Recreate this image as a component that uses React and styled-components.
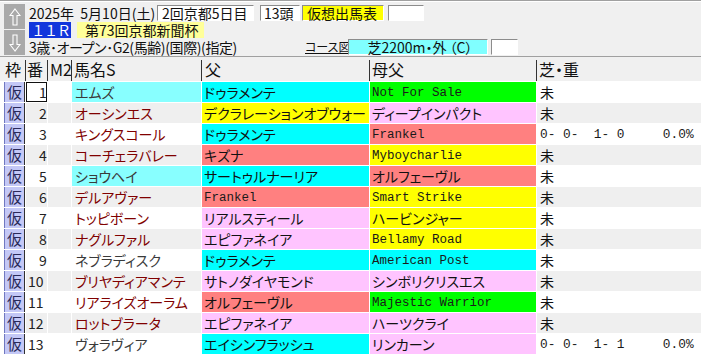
import React from 'react';
import styled, { createGlobalStyle, css } from 'styled-components';

const GlobalStyle = createGlobalStyle`
  body {
    margin: 0;
    background: #ffffff;
    font-family: "Noto Sans CJK JP", sans-serif;
    font-feature-settings: "palt" 1;
  }
`;

const Page = styled.div`
  width: 701px;
  height: 359px;
  overflow: hidden;
  background: #ffffff;
`;

const TopPanel = styled.div`
  display: flex;
  height: 52px;
  padding: 3px 0 0 4px;
  background: #f0f0f0;
  border-top: 1px solid #a0a0a0;
  border-bottom: 1px solid #a0a0a0;
  box-shadow: inset 0 1px 0 #ffffff;
`;

const NavColumn = styled.div`
  display: flex;
  flex-direction: column;
  gap: 1px;
`;

const NavButton = styled.div`
  width: 21px;
  height: 25px;
  display: flex;
  align-items: center;
  justify-content: center;
  background: #a9a9a9;
`;

const InfoColumn = styled.div`
  display: grid;
  grid-template-rows: 16px 16px 16px;
  row-gap: 1px;
  margin-left: 4px;
  padding-top: 1px;
`;

const InfoLine = styled.div`
  display: flex;
  align-items: center;
  font-size: 14px;
  line-height: 16px;
  color: #111;
  white-space: nowrap;
`;

const Label = styled.span`
  display: inline-block;
  width: ${p => p.w}px;
  font-size: ${p => p.size || 14}px;
  letter-spacing: ${p => p.ls || 0}px;
`;

const Field = styled.span`
  display: inline-block;
  box-sizing: border-box;
  width: ${p => p.w}px;
  height: 16px;
  margin-left: ${p => p.ml || 0}px;
  padding-left: ${p => p.pl || 4}px;
  background: ${p => p.bg || '#ffffff'};
  color: ${p => p.fg || '#111'};
  font-size: 14px;
  line-height: 15px;
  letter-spacing: ${p => p.ls || 0}px;
  text-align: ${p => (p.center ? 'center' : 'left')};
  border-top: 1px solid #8c8c8c;
  border-left: 1px solid #8c8c8c;
  border-bottom: 1px solid #ffffff;
  border-right: 1px solid #ffffff;
  ${p =>
    p.flat &&
    css`
      border: none;
      line-height: 16px;
    `}
`;

const CourseLink = styled.span`
  display: inline-block;
  width: 40px;
  font-size: 12px;
  text-decoration: underline;
  color: #111;
`;

const Table = styled.div`
  display: grid;
  grid-template-columns: 21px 21px 23px 129px 167px 166px 164px;
  grid-auto-rows: 20px;
  grid-template-rows: 24px;
  column-gap: 1px;
  row-gap: 1px;
  padding-left: 4px;
  background: #ffffff;
`;

const HeadCell = styled.div`
  position: relative;
  background: #f0f0f0;
  font-size: 16px;
  line-height: 24px;
  padding-left: ${p => p.pl || 2}px;
  color: #111;
  white-space: nowrap;
  ${p =>
    p.divider &&
    css`
      &::before {
        content: '';
        position: absolute;
        left: -1px;
        top: 3px;
        bottom: 0;
        width: 1px;
        background: #333;
      }
    `}
`;

const HeadFill = styled.div`
  grid-column: 1 / -1;
  grid-row: 1;
  margin-left: -4px;
  background: #f0f0f0;
`;

const FrameCell = styled.div`
  background: #c4c8f6;
  border-left: 1px solid #7078c0;
  border-right: 1px solid #303030;
  box-sizing: border-box;
  font-size: 15px;
  line-height: 20px;
  text-align: center;
  color: #2a2a5a;
`;

const NumCell = styled.div`
  box-sizing: border-box;
  background: ${p => (p.even ? '#efefef' : '#ffffff')};
  font-size: 14px;
  line-height: 20px;
  padding-left: ${p => (p.single ? 13 : 2)}px;
  color: #222;
  ${p =>
    p.focus &&
    css`
      border: 1px solid #111;
      line-height: 18px;
      padding-left: 12px;
    `}
`;

const Cell = styled.div`
  box-sizing: border-box;
  background: ${p => p.bg || (p.even ? '#efefef' : '#ffffff')};
  font-size: 14px;
  line-height: 20px;
  padding-left: ${p => p.pl || 2}px;
  color: ${p => p.fg || '#111'};
  white-space: pre;
  overflow: hidden;
  ${p =>
    p.mono &&
    css`
      font-family: "Liberation Mono", "DejaVu Sans Mono", monospace;
      font-size: ${p.small ? 12.5 : 12.8}px;
      padding-top: 2px;
      line-height: 18px;
      color: #1a1a1a;
    `}
`;

const CYAN = '#00ffff';
const LCYAN = '#88ffff';
const YELLOW = '#ffff00';
const PINK = '#ffc4ff';
const SALMON = '#ff8080';
const GREEN = '#00ff00';

const RED = '#800000';
const DARK = '#3a3a3a';

const horses = [
  { name: 'エムズ', nameBg: LCYAN, fg: DARK, sire: 'ドゥラメンテ', sireBg: CYAN, dam: 'Not For Sale', damBg: GREEN, rec: '未' },
  { name: 'オーシンエス', fg: RED, sire: 'デクラレーションオブウォー', sireBg: YELLOW, dam: 'ディープインパクト', damBg: PINK, rec: '未' },
  { name: 'キングスコール', fg: RED, sire: 'ドゥラメンテ', sireBg: CYAN, dam: 'Frankel', damBg: SALMON, rec: '0- 0-  1- 0     0.0%' },
  { name: 'コーチェラバレー', fg: RED, sire: 'キズナ', sireBg: SALMON, dam: 'Myboycharlie', damBg: YELLOW, rec: '未' },
  { name: 'ショウヘイ', nameBg: LCYAN, fg: DARK, sire: 'サートゥルナーリア', sireBg: CYAN, dam: 'オルフェーヴル', damBg: SALMON, rec: '未' },
  { name: 'デルアヴァー', fg: RED, sire: 'Frankel', sireBg: SALMON, dam: 'Smart Strike', damBg: YELLOW, rec: '未' },
  { name: 'トッピボーン', fg: RED, sire: 'リアルスティール', sireBg: PINK, dam: 'ハービンジャー', damBg: YELLOW, rec: '未' },
  { name: 'ナグルファル', fg: RED, sire: 'エピファネイア', sireBg: PINK, dam: 'Bellamy Road', damBg: YELLOW, rec: '未' },
  { name: 'ネブラディスク', fg: DARK, sire: 'ドゥラメンテ', sireBg: CYAN, dam: 'American Post', damBg: CYAN, rec: '未' },
  { name: 'ブリヤディアマンテ', fg: RED, sire: 'サトノダイヤモンド', sireBg: PINK, dam: 'シンボリクリスエス', damBg: PINK, rec: '未' },
  { name: 'リアライズオーラム', fg: RED, sire: 'オルフェーヴル', sireBg: SALMON, dam: 'Majestic Warrior', damBg: GREEN, rec: '未' },
  { name: 'ロットブラータ', fg: RED, sire: 'エピファネイア', sireBg: PINK, dam: 'ハーツクライ', damBg: PINK, rec: '未' },
  { name: 'ヴォラヴィア', fg: DARK, sire: 'エイシンフラッシュ', sireBg: CYAN, dam: 'リンカーン', damBg: PINK, rec: '0- 0-  1- 1     0.0%' },
];

const isLatin = s => /^[A-Za-z ]+$/.test(s);
const isRecord = s => s !== '未';

const Arrow = ({ down }) => (
  <svg width="12" height="18" viewBox="0 0 12 18" style={down ? { transform: 'rotate(180deg)' } : undefined}>
    <polygon
      points="6,1 11,7.5 8,7.5 8,17 4,17 4,7.5 1,7.5"
      fill="none"
      stroke="#ffffff"
      strokeWidth="1.1"
      strokeLinejoin="miter"
    />
  </svg>
);

const App = () => (
  <Page>
    <GlobalStyle />
    <TopPanel>
      <NavColumn>
        <NavButton>
          <Arrow />
        </NavButton>
        <NavButton>
          <Arrow down />
        </NavButton>
      </NavColumn>
      <InfoColumn>
        <InfoLine>
          <Label w={128}>2025年&nbsp;&nbsp;5月10日(土)</Label>
          <Field w={97}>2回京都5日目</Field>
          <Field w={40} ml={6} pl={3}>13頭</Field>
          <Field w={82} ml={2} pl={4} bg="#ffff00">仮想出馬表</Field>
          <Field w={36} ml={4} />
        </InfoLine>
        <InfoLine>
          <Field w={42} flat bg="#1236dc" fg="#ffffff" center ls={2}>１１Ｒ</Field>
          <Field w={127} ml={6} flat bg="#ffff99" pl={8}>第73回京都新聞杯</Field>
        </InfoLine>
        <InfoLine>
          <Label w={276} ls={-0.4}>3歳･オープン･G2(馬齢)(国際)(指定)</Label>
          <CourseLink>コース図</CourseLink>
          <Field w={140} ml={3} bg="#80ffff" center>芝2200m・外 （C）</Field>
          <Field w={27} ml={3} />
        </InfoLine>
      </InfoColumn>
    </TopPanel>
    <Table>
      <HeadFill />
      <HeadCell style={{ gridRow: 1, gridColumn: 1 }} pl={1}>枠</HeadCell>
      <HeadCell style={{ gridRow: 1, gridColumn: 2 }} divider pl={1}>番</HeadCell>
      <HeadCell style={{ gridRow: 1, gridColumn: 3 }} divider pl={2}>M2</HeadCell>
      <HeadCell style={{ gridRow: 1, gridColumn: 4 }} divider pl={2}>馬名S</HeadCell>
      <HeadCell style={{ gridRow: 1, gridColumn: 5 }} divider pl={3}>父</HeadCell>
      <HeadCell style={{ gridRow: 1, gridColumn: 6 }} divider pl={2}>母父</HeadCell>
      <HeadCell style={{ gridRow: 1, gridColumn: 7 }} divider pl={2}>芝・重</HeadCell>
      {horses.map((h, i) => {
        const even = i % 2 === 1;
        const num = i + 1;
        return (
          <React.Fragment key={num}>
            <FrameCell>仮</FrameCell>
            <NumCell even={even} single={num < 10} focus={num === 1}>{num}</NumCell>
            <Cell even={even} />
            <Cell even={even} bg={h.nameBg} fg={h.fg} pl={3}>{h.name}</Cell>
            <Cell bg={h.sireBg} mono={isLatin(h.sire)} small pl={2}>{h.sire}</Cell>
            <Cell bg={h.damBg} mono={isLatin(h.dam)} small pl={2}>{h.dam}</Cell>
            <Cell even={even} mono={isRecord(h.rec)} pl={3}>{h.rec}</Cell>
          </React.Fragment>
        );
      })}
    </Table>
  </Page>
);

export default App;
